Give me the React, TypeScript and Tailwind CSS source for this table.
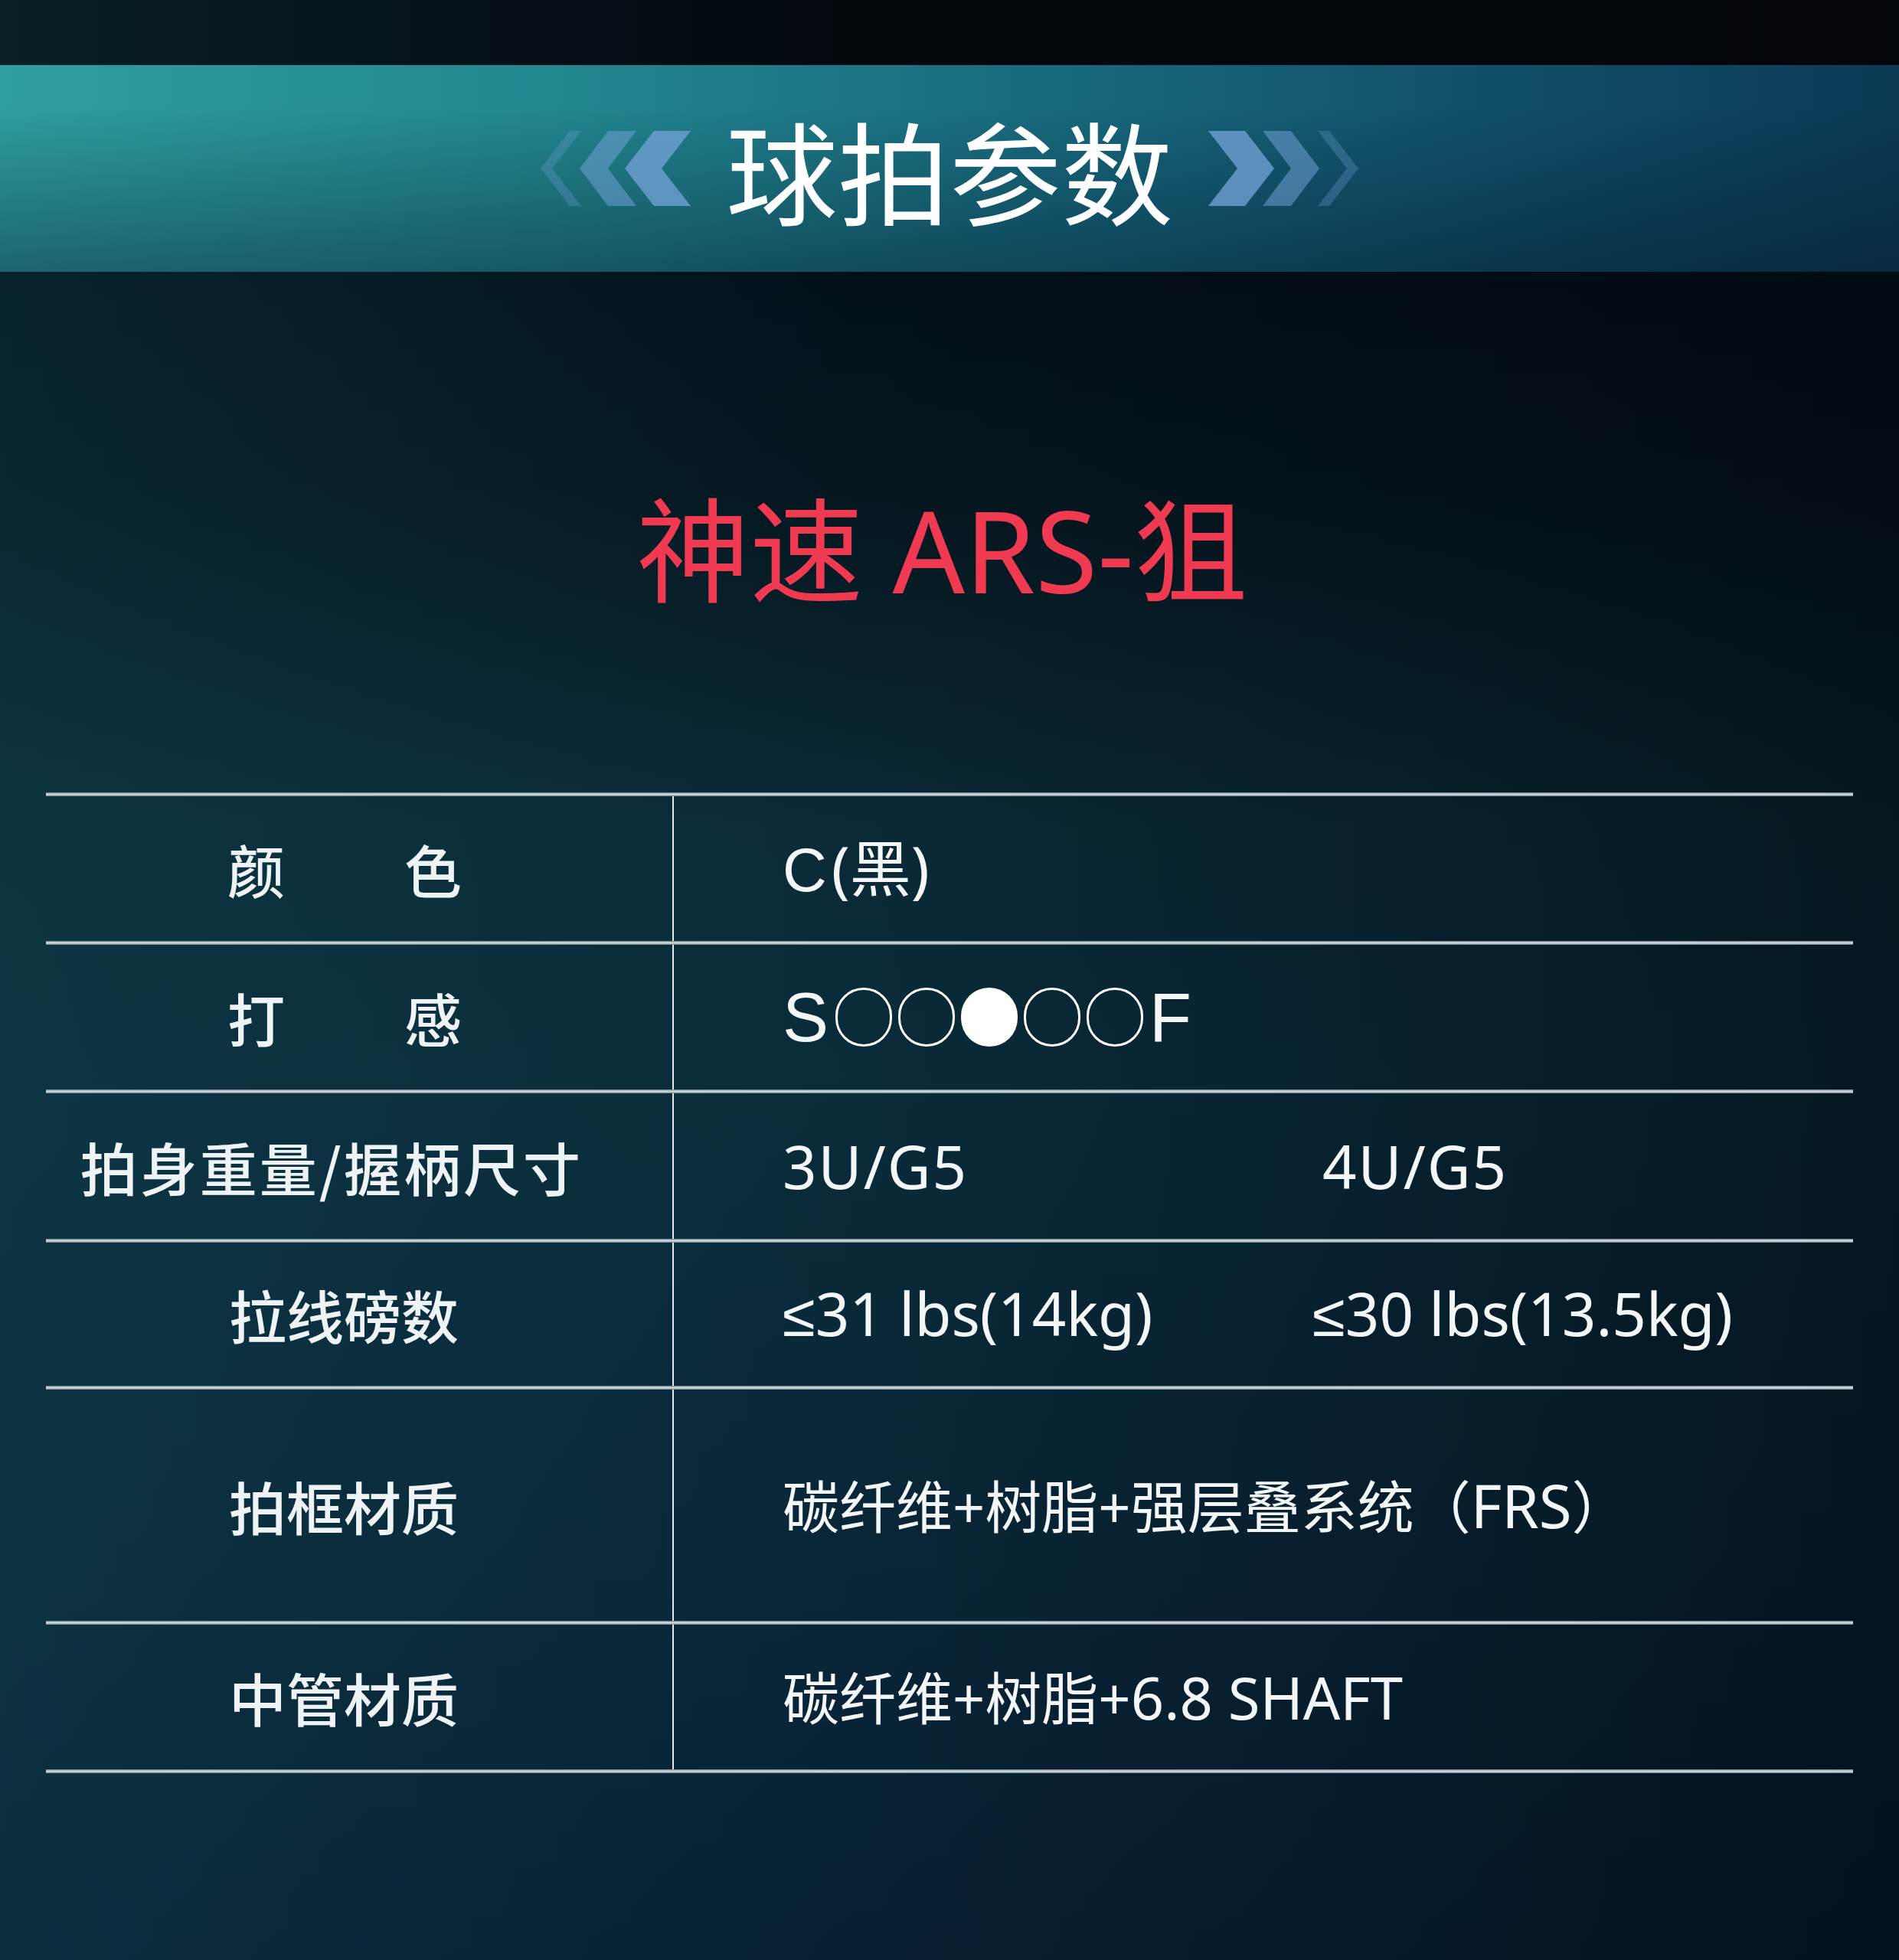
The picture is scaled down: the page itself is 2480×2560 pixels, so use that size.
import React from "react";

const LeftChevrons = () => (
  <svg width="205" height="98" viewBox="0 0 205 98" className="shrink-0">
    <polygon points="9,49 47,0 62,0 24,49 62,98 47,98" fill="#6fa0d3" fillOpacity="0.3" />
    <polygon points="60,49 97,0 134,0 97,49 134,98 97,98" fill="#6fa0d3" fillOpacity="0.55" />
    <polygon points="119,49 157,0 205,0 167,49 205,98 157,98" fill="#6fa0d3" fillOpacity="0.8" />
  </svg>
);

const RightChevrons = () => (
  <svg width="205" height="98" viewBox="0 0 205 98" className="shrink-0">
    <polygon points="196,49 158,0 143,0 181,49 143,98 158,98" fill="#6fa0d3" fillOpacity="0.3" />
    <polygon points="145,49 108,0 71,0 108,49 71,98 108,98" fill="#6fa0d3" fillOpacity="0.55" />
    <polygon points="86,49 48,0 0,0 38,49 0,98 48,98" fill="#6fa0d3" fillOpacity="0.8" />
  </svg>
);

const Line = () => (
  <div className="h-[5px] bg-[linear-gradient(180deg,#6b8089_0%,#d8e0e3_50%,#6b8089_100%)]" />
);

const Circle = ({ filled }: { filled?: boolean }) => (
  <span
    className={
      filled
        ? "inline-block w-[74px] h-[77px] rounded-full bg-white"
        : "inline-block w-[74px] h-[77px] rounded-full border-[3px] border-white"
    }
  />
);

const Le = () => <span className="font-['Liberation_Sans',sans-serif]">≤</span>;

type Row = { label: string; h: string; labelCls: string; value: React.ReactNode };

const latin = "font-['Noto_Sans','Noto_Sans_CJK_SC',sans-serif]";

const rows: Row[] = [
  {
    label: "颜\u3000\u3000色",
    h: "h-[189px]",
    labelCls: "pr-[36px] tracking-[2px]",
    value: (
      <span className="text-[80px] leading-none">
        <span className="font-['Liberation_Sans',sans-serif]">C</span>
        <span className="ml-[6px]">(黑)</span>
      </span>
    ),
  },
  {
    label: "打\u3000\u3000感",
    h: "h-[189px]",
    labelCls: "pr-[36px] tracking-[2px]",
    value: (
      <div className="flex items-center font-['Liberation_Sans',sans-serif]" aria-label="S○○●○○F">
        <span className="text-[90px] leading-none mr-[9px]">S</span>
        <div className="flex items-center gap-[8px]">
          <Circle />
          <Circle />
          <Circle filled />
          <Circle />
          <Circle />
        </div>
        <span className="text-[90px] leading-none ml-[8px]">F</span>
      </div>
    ),
  },
  {
    label: "拍身重量/握柄尺寸",
    h: "h-[190px]",
    labelCls: "pr-[72px] tracking-[3px]",
    value: (
      <div className="flex items-center text-[78px] leading-none tracking-[2px]">
        <span className="w-[705px]">3U/G5</span>
        <span>4U/G5</span>
      </div>
    ),
  },
  {
    label: "拉线磅数",
    h: "h-[187px]",
    labelCls: "pr-[40px]",
    value: (
      <div className="flex items-center text-[78px] leading-none">
        <span className="w-[692px]">
          <Le />
          31 lbs(14kg)
        </span>
        <span>
          <Le />
          30 lbs(13.5kg)
        </span>
      </div>
    ),
  },
  {
    label: "拍框材质",
    h: "h-[302px]",
    labelCls: "pr-[40px]",
    value: (
      <span className="text-[74px] leading-none">
        碳纤维+树脂+强层叠系统（<span className="text-[78px]">FRS</span>）
      </span>
    ),
  },
  {
    label: "中管材质",
    h: "h-[189px]",
    labelCls: "pr-[40px]",
    value: (
      <span className="text-[74px] leading-none">
        碳纤维+树脂+<span className="text-[76px]">6.8 SHAFT</span>
      </span>
    ),
  },
];

export default function App() {
  return (
    <div className="relative w-[2480px] h-[2560px] overflow-hidden bg-[linear-gradient(90deg,rgba(18,72,84,0.35)_0%,rgba(0,0,0,0)_45%,rgba(0,4,8,0.5)_100%),linear-gradient(180deg,#03080d_0%,#03080d_3.3%,#03101a_14%,#05161f_25%,#0a2a36_42%,#0a2b3a_55%,#092638_80%,#071f33_100%)] font-['Noto_Sans_CJK_SC',sans-serif] text-white">
      <div className="h-[85px]" />
      <div className="h-[270px] flex items-center justify-center gap-[46px] bg-[linear-gradient(180deg,rgba(0,0,0,0)_20%,rgba(0,15,35,0.4)_100%),linear-gradient(90deg,#2f9ea1_0%,#22868f_30%,#16647a_60%,#0f4863_85%,#0c3a55_100%)]">
        <LeftChevrons />
        <span className="text-[146px] leading-none font-normal text-white">球拍参数</span>
        <RightChevrons />
      </div>
      <div className="h-[680px] flex flex-col items-center">
        <div className={`mt-[293px] pr-[20px] text-[148px] leading-[140px] text-[#f03a52] ${latin}`}>
          神速 ARS-狙
        </div>
      </div>
      <div className="mx-[60px]">
        <Line />
        {rows.map((r, i) => (
          <React.Fragment key={i}>
            <div className={`flex ${r.h}`}>
              <div
                className={`w-[820px] shrink-0 flex items-center justify-center border-r-2 border-[#e3ebee] text-[75px] leading-none font-medium text-[#eef3f5] ${r.labelCls}`}
              >
                {r.label}
              </div>
              <div className={`flex-1 flex items-center pl-[142px] text-[#f4f7f8] ${latin}`}>
                {r.value}
              </div>
            </div>
            <Line />
          </React.Fragment>
        ))}
      </div>
    </div>
  );
}
